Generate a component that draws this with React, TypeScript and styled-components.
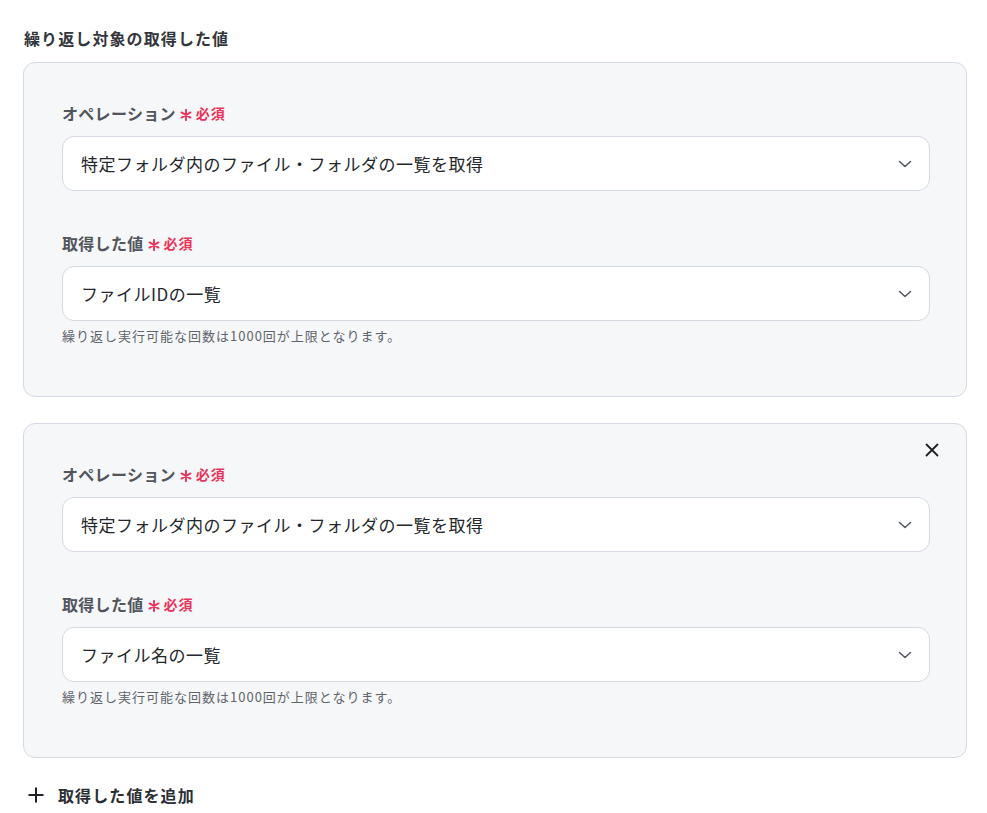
import React from 'react';
import styled, { createGlobalStyle } from 'styled-components';

type Field = {
  label: string;
  value: string;
};

type Group = {
  id: number;
  removable: boolean;
  fields: Field[];
};

const groups: Group[] = [
  {
    id: 1,
    removable: false,
    fields: [
      { label: 'オペレーション', value: '特定フォルダ内のファイル・フォルダの一覧を取得' },
      { label: '取得した値', value: 'ファイルIDの一覧' },
    ],
  },
  {
    id: 2,
    removable: true,
    fields: [
      { label: 'オペレーション', value: '特定フォルダ内のファイル・フォルダの一覧を取得' },
      { label: '取得した値', value: 'ファイル名の一覧' },
    ],
  },
];

const ChevronDown = () => (
  <svg width="16" height="16" viewBox="0 0 16 16" fill="none">
    <path d="M2.5 5.5 8 10.5l5.5-5" stroke="#555a63" strokeWidth="1.6" strokeLinecap="round" strokeLinejoin="round" />
  </svg>
);

const CloseIcon = () => (
  <svg width="16" height="16" viewBox="0 0 16 16" fill="none">
    <path d="M2.5 2.5l11 11M13.5 2.5l-11 11" stroke="#1f2124" strokeWidth="1.8" strokeLinecap="round" />
  </svg>
);

const PlusIcon = () => (
  <svg width="18" height="18" viewBox="0 0 18 18" fill="none">
    <path d="M9 1.5v15M1.5 9h15" stroke="#1f2124" strokeWidth="2" />
  </svg>
);

// six-armed asterisk used for required marks
const RequiredMark = () => (
  <svg width="12" height="12" viewBox="0 0 12 12" fill="none">
    <path d="M6 0.8v10.4M1.5 3.4l9 5.2M10.5 3.4l-9 5.2" stroke="#e8355b" strokeWidth="1.9" strokeLinecap="round" />
  </svg>
);

const SelectField = ({ label, value, hint }: Field & { hint?: string }) => (
  <StyledField>
    <StyledLabel>
      {label}
      <StyledRequired>
        <StyledMark>
          <RequiredMark />
        </StyledMark>
        必須
      </StyledRequired>
    </StyledLabel>
    <StyledSelect>
      <span>{value}</span>
      <ChevronDown />
    </StyledSelect>
    {hint && <StyledHint>{hint}</StyledHint>}
  </StyledField>
);

const App = () => {
  return (
    <>
      <GlobalStyle />
      <StyledPage>
        <StyledHeading>繰り返し対象の取得した値</StyledHeading>
        <StyledList>
          {groups.map((group) => (
            <StyledCard key={group.id}>
              {group.removable && (
                <StyledClose aria-label="削除">
                  <CloseIcon />
                </StyledClose>
              )}
              {group.fields.map((field, i) => (
                <SelectField
                  key={field.label}
                  label={field.label}
                  value={field.value}
                  hint={i === group.fields.length - 1 ? '繰り返し実行可能な回数は1000回が上限となります。' : undefined}
                />
              ))}
            </StyledCard>
          ))}
        </StyledList>
        <StyledAddButton>
          <PlusIcon />
          取得した値を追加
        </StyledAddButton>
      </StyledPage>
    </>
  );
};

export default App;

const GlobalStyle = createGlobalStyle`
  body {
    margin: 0;
    background: #ffffff;
    font-family: "Noto Sans CJK JP", "Noto Sans", sans-serif;
    color: #2b2e33;
  }
`;

const StyledPage = styled.div`
  display: flex;
  flex-direction: column;
  padding: 26px 20px 0 23px;
`;

const StyledHeading = styled.h2`
  margin: 0 0 12px 1px;
  font-size: 16px;
  line-height: 24px;
  font-weight: 700;
  letter-spacing: 1.1px;
  color: #33363b;
`;

const StyledList = styled.div`
  display: flex;
  flex-direction: column;
  gap: 26px;
`;

const StyledCard = styled.div`
  position: relative;
  display: flex;
  flex-direction: column;
  gap: 40px;
  padding: 38px 36px 50px 38px;
  background: #f6f7f9;
  border: 1px solid #d5d9e1;
  border-radius: 12px;
`;

const StyledClose = styled.button`
  position: absolute;
  top: 18px;
  right: 26px;
  display: flex;
  padding: 0;
  border: none;
  background: none;
  cursor: pointer;
`;

const StyledField = styled.div`
  display: flex;
  flex-direction: column;
`;

const StyledLabel = styled.div`
  display: flex;
  align-items: center;
  gap: 4px;
  margin-bottom: 11px;
  font-size: 16px;
  line-height: 24px;
  font-weight: 700;
  letter-spacing: 0.3px;
  color: #51555c;
`;

const StyledRequired = styled.span`
  display: flex;
  align-items: center;
  gap: 4px;
  font-size: 14px;
  font-weight: 700;
  letter-spacing: 1px;
  color: #e8355b;
`;

const StyledMark = styled.span`
  display: flex;
  margin-top: 3px;
`;

const StyledSelect = styled.div`
  display: flex;
  align-items: center;
  justify-content: space-between;
  height: 55px;
  box-sizing: border-box;
  padding: 0 16px 0 18px;
  background: #ffffff;
  border: 1px solid #d5d9e1;
  border-radius: 12px;
  font-size: 17px;
  letter-spacing: 0.5px;
  color: #24272b;
`;

const StyledHint = styled.div`
  margin-top: 5px;
  font-size: 13px;
  line-height: 20px;
  letter-spacing: 1px;
  color: #60646b;
`;

const StyledAddButton = styled.button`
  display: flex;
  align-items: center;
  gap: 13px;
  align-self: flex-start;
  margin-top: 25px;
  padding: 0 0 0 4px;
  border: none;
  background: none;
  font-family: inherit;
  font-size: 16px;
  line-height: 24px;
  font-weight: 700;
  letter-spacing: 1.1px;
  color: #2b2e33;
  cursor: pointer;
`;
